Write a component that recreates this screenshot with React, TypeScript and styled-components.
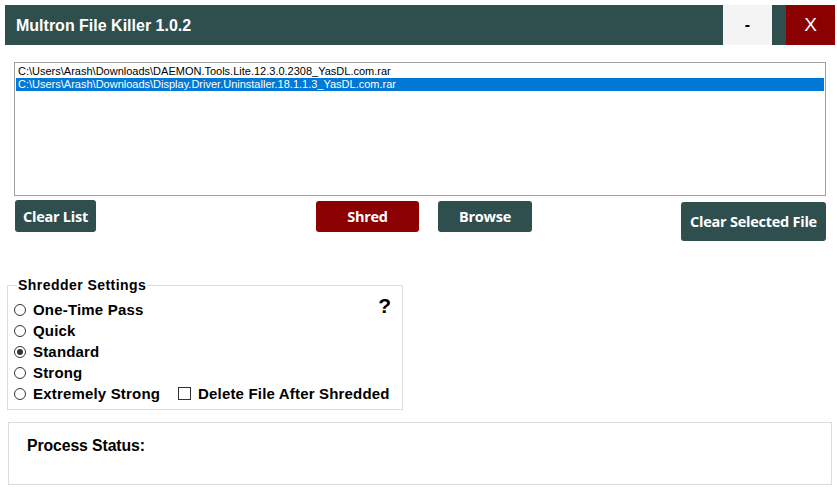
import React from "react";
import styled, { createGlobalStyle } from "styled-components";

const GlobalStyle = createGlobalStyle`
  html, body {
    margin: 0;
    padding: 0;
    background: #ffffff;
  }
  body {
    width: 837px;
    height: 497px;
    overflow: hidden;
    font-family: "Liberation Sans", Arial, sans-serif;
  }
`;

const Window = styled.div`
  display: flex;
  flex-direction: column;
  width: 837px;
  height: 497px;
  background: #ffffff;
`;

const TitleBar = styled.div`
  display: flex;
  align-items: stretch;
  height: 40px;
  margin: 5px 2px 0 5px;
  background: #2f4f4f;
`;

const Title = styled.div`
  flex: 1;
  display: flex;
  align-items: center;
  padding: 1px 0 0 11px;
  color: #ffffff;
  font-size: 16px;
  font-weight: bold;
`;

const WindowButton = styled.button<{ $variant: "min" | "close" }>`
  width: 49px;
  border: none;
  padding: 0;
  margin-left: ${(p) => (p.$variant === "close" ? "14px" : "0")};
  background: ${(p) => (p.$variant === "close" ? "#8b0000" : "#f4f4f4")};
  color: ${(p) => (p.$variant === "close" ? "#ffffff" : "#000000")};
  font-family: "Liberation Sans", Arial, sans-serif;
  font-size: ${(p) => (p.$variant === "close" ? "19px" : "16px")};
  font-weight: ${(p) => (p.$variant === "close" ? "normal" : "bold")};
  cursor: pointer;
`;

const FileList = styled.ul`
  list-style: none;
  margin: 17px 0 0 14px;
  padding: 2px 1px;
  width: 812px;
  height: 134px;
  box-sizing: border-box;
  border: 1px solid #a0a0a0;
  overflow: hidden;
`;

const FileItem = styled.li<{ $selected?: boolean }>`
  height: 13px;
  line-height: 13px;
  padding-left: 2px;
  font-family: "Liberation Sans", Arial, sans-serif;
  font-size: 11px;
  white-space: nowrap;
  color: ${(p) => (p.$selected ? "#ffffff" : "#000000")};
  background: ${(p) => (p.$selected ? "#0078d7" : "transparent")};
`;

const ActionRow = styled.div`
  display: flex;
  align-items: flex-start;
  margin-top: 4px;
  padding-left: 15px;
  height: 42px;
`;

const ActionButton = styled.button<{
  $tone: "dark" | "danger";
  $width: number;
  $height: number;
  $offsetX: number;
  $offsetY: number;
}>`
  width: ${(p) => p.$width}px;
  height: ${(p) => p.$height}px;
  margin-left: ${(p) => p.$offsetX}px;
  margin-top: ${(p) => p.$offsetY}px;
  padding: 0;
  border: none;
  border-radius: 3px;
  background: ${(p) => (p.$tone === "danger" ? "#8b0000" : "#2f4f4f")};
  color: #ffffff;
  font-family: "Open Sans", "Noto Sans", sans-serif;
  font-size: 14.5px;
  font-weight: bold;
  letter-spacing: -0.25px;
  cursor: pointer;
`;

const Settings = styled.fieldset`
  margin: 35px 0 0 7px;
  padding: 0 0 0 6px;
  width: 396px;
  height: 133px;
  box-sizing: border-box;
  border: 1px solid #dcdcdc;
`;

const SettingsLegend = styled.legend`
  margin-left: 3px;
  padding: 0 1px;
  font-size: 14px;
  font-weight: bold;
  line-height: 16px;
  letter-spacing: 0.45px;
  color: #000000;
`;

const OptionGrid = styled.div`
  display: grid;
  grid-template-columns: 164px 1fr;
  grid-auto-rows: 21px;
  margin-top: 6px;
`;

const Option = styled.label`
  display: flex;
  align-items: center;
  gap: 7px;
  font-size: 15px;
  font-weight: bold;
  letter-spacing: 0.18px;
  color: #000000;
  white-space: nowrap;
`;

const RadioMark = styled.span<{ $checked?: boolean }>`
  position: relative;
  width: 12px;
  height: 12px;
  box-sizing: border-box;
  border: 1px solid #333333;
  border-radius: 50%;
  background: #ffffff;

  &::after {
    content: "";
    display: ${(p) => (p.$checked ? "block" : "none")};
    position: absolute;
    left: 2px;
    top: 2px;
    width: 6px;
    height: 6px;
    border-radius: 50%;
    background: #333333;
  }
`;

const CheckMark = styled.span`
  width: 13px;
  height: 13px;
  box-sizing: border-box;
  border: 1px solid #333333;
  background: #ffffff;
`;

const HelpMark = styled.span`
  justify-self: end;
  align-self: start;
  margin: -5px 11px 0 0;
  font-size: 21px;
  font-weight: bold;
  line-height: 24px;
  color: #000000;
  cursor: help;
`;

const StatusPanel = styled.div`
  margin: 12px 0 0 8px;
  width: 824px;
  height: 63px;
  box-sizing: border-box;
  border: 1px solid #dcdcdc;
  padding: 14px 0 0 18px;
`;

const StatusLabel = styled.div`
  font-size: 15.8px;
  font-weight: bold;
  letter-spacing: -0.1px;
  color: #000000;
`;

const files = [
  "C:\\Users\\Arash\\Downloads\\DAEMON.Tools.Lite.12.3.0.2308_YasDL.com.rar",
  "C:\\Users\\Arash\\Downloads\\Display.Driver.Uninstaller.18.1.1.3_YasDL.com.rar",
];

const passes = ["One-Time Pass", "Quick", "Standard", "Strong", "Extremely Strong"];

export default function App() {
  const selectedFile = 1;
  const selectedPass = "Standard";

  return (
    <Window>
      <GlobalStyle />
      <TitleBar>
        <Title>Multron File Killer 1.0.2</Title>
        <WindowButton $variant="min">-</WindowButton>
        <WindowButton $variant="close">X</WindowButton>
      </TitleBar>

      <FileList>
        {files.map((f, i) => (
          <FileItem key={f} $selected={i === selectedFile}>
            {f}
          </FileItem>
        ))}
      </FileList>

      <ActionRow>
        <ActionButton $tone="dark" $width={81} $height={32} $offsetX={0} $offsetY={0}>
          Clear List
        </ActionButton>
        <ActionButton $tone="danger" $width={103} $height={31} $offsetX={220} $offsetY={1}>
          Shred
        </ActionButton>
        <ActionButton $tone="dark" $width={94} $height={31} $offsetX={19} $offsetY={1}>
          Browse
        </ActionButton>
        <ActionButton $tone="dark" $width={145} $height={39} $offsetX={149} $offsetY={2}>
          Clear Selected File
        </ActionButton>
      </ActionRow>

      <Settings>
        <SettingsLegend>Shredder Settings</SettingsLegend>
        <OptionGrid>
          {passes.map((p, i) => (
            <React.Fragment key={p}>
              <Option>
                <RadioMark $checked={p === selectedPass} />
                {p}
              </Option>
              {i === 0 && <HelpMark>?</HelpMark>}
              {i === passes.length - 1 && (
                <Option>
                  <CheckMark />
                  Delete File After Shredded
                </Option>
              )}
              {i > 0 && i < passes.length - 1 && <span />}
            </React.Fragment>
          ))}
        </OptionGrid>
      </Settings>

      <StatusPanel>
        <StatusLabel>Process Status:</StatusLabel>
      </StatusPanel>
    </Window>
  );
}
